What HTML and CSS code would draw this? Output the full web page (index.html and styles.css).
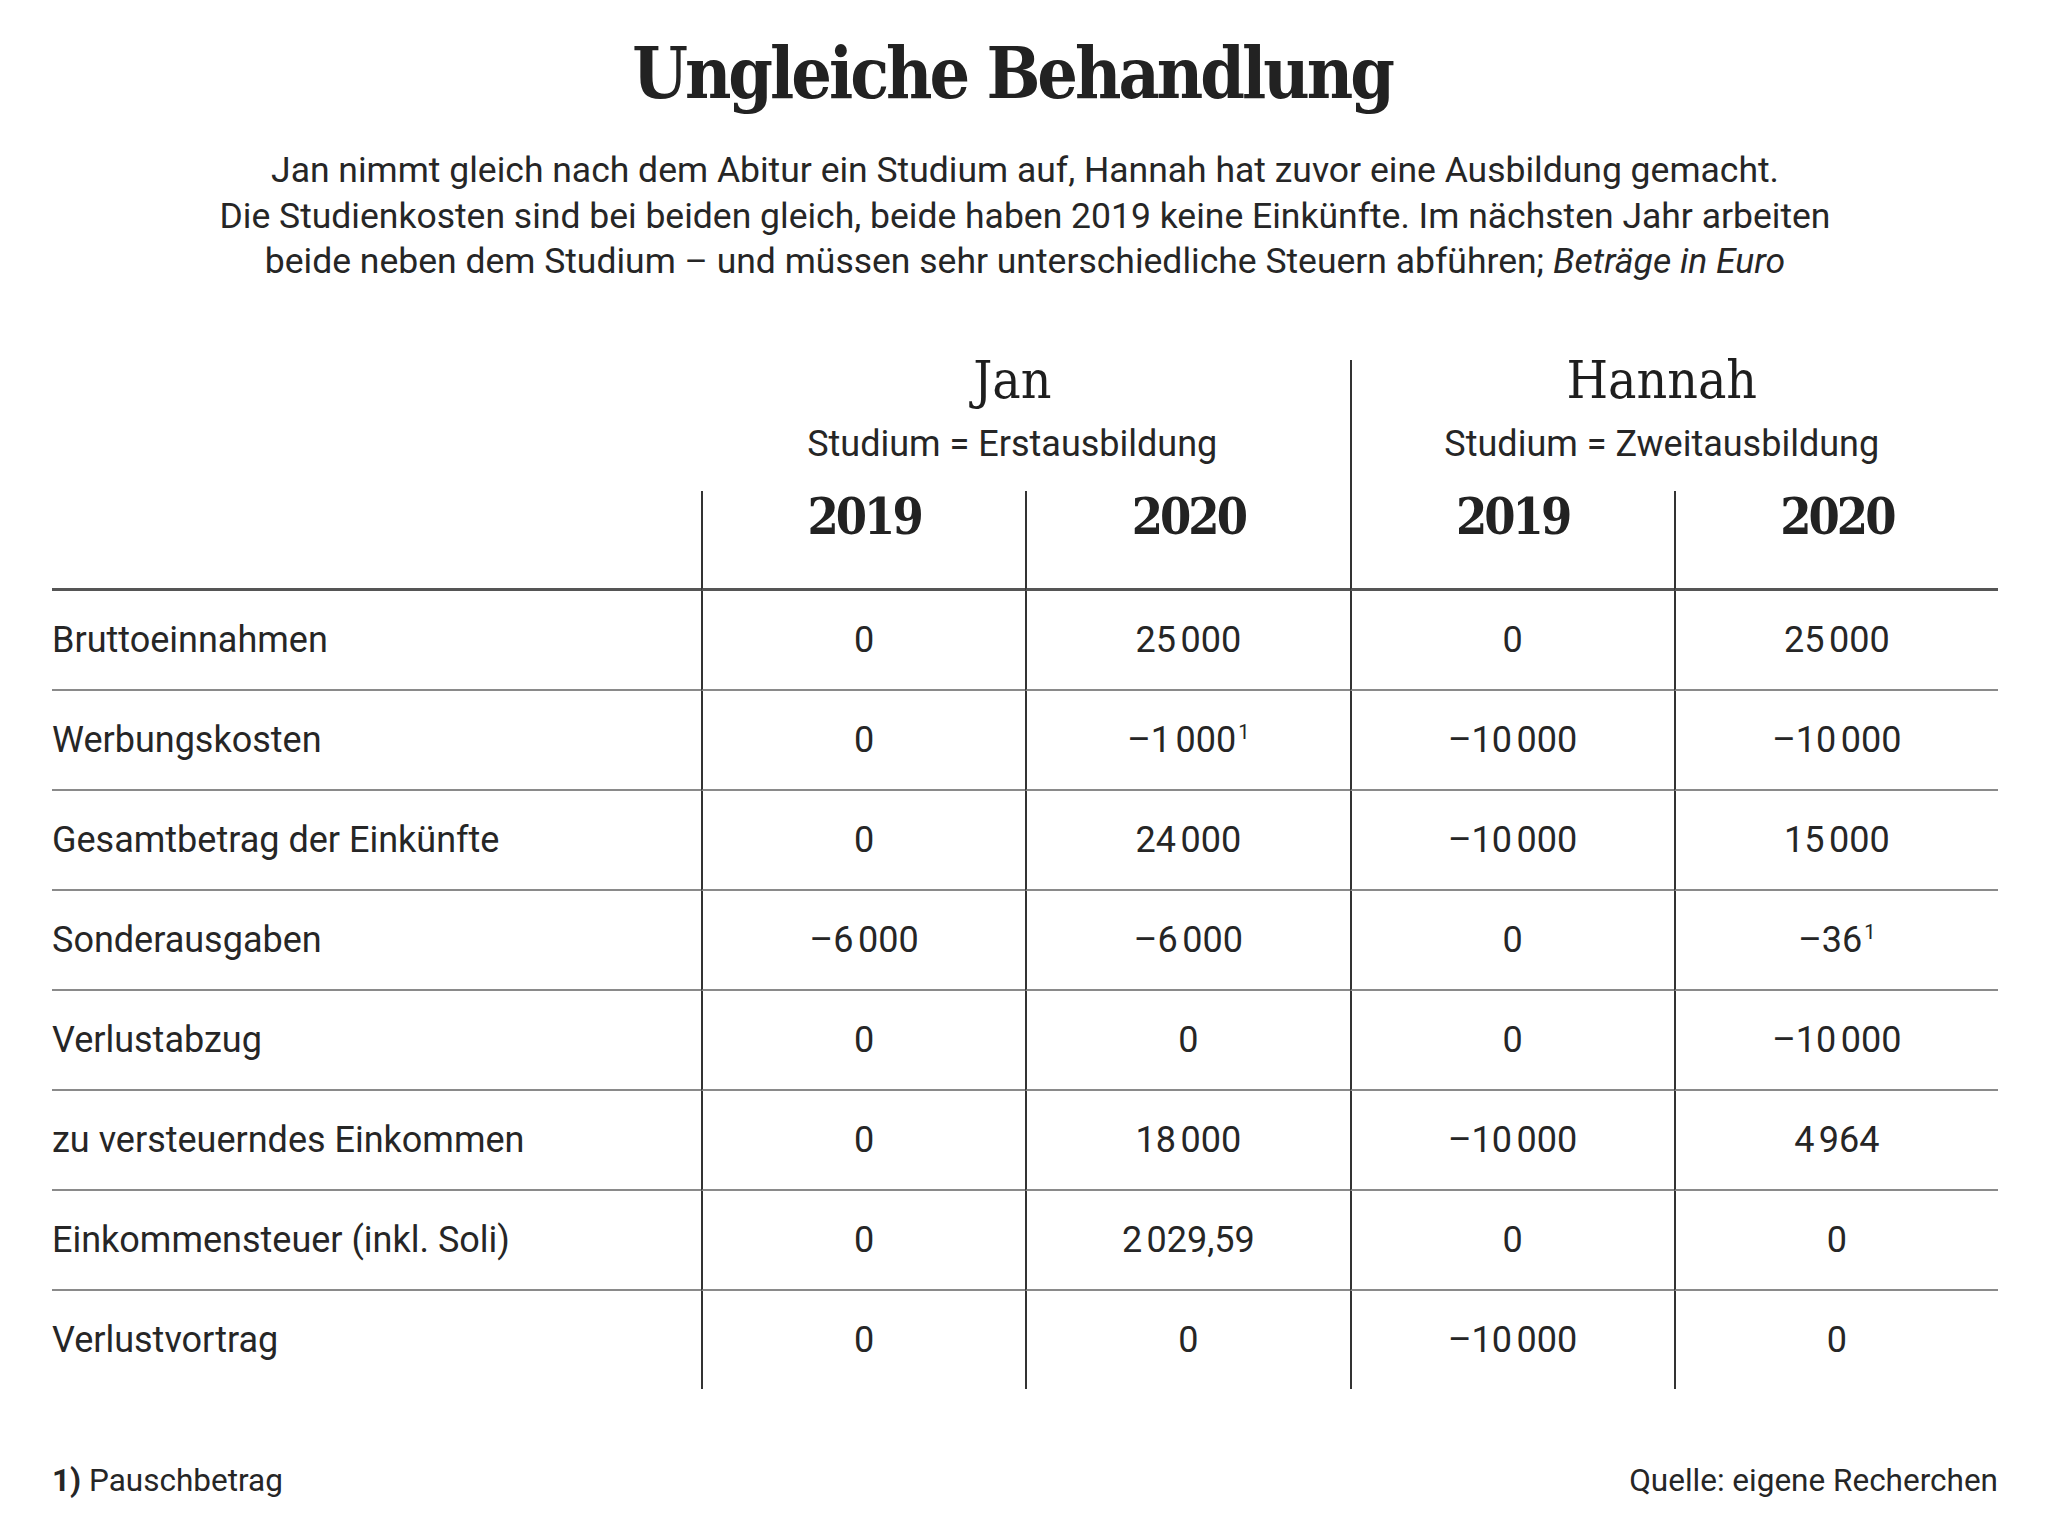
FILE: index.html
```html
<!DOCTYPE html>
<html lang="de">
<head>
<meta charset="utf-8">
<title>Ungleiche Behandlung</title>
<link rel="stylesheet" href="styles.css">
</head>
<body>
<main class="page">
  <h1 class="title">Ungleiche Behandlung</h1>
  <p class="intro">Jan nimmt gleich nach dem Abitur ein Studium auf, Hannah hat zuvor eine Ausbildung gemacht.<br>Die Studienkosten sind bei beiden gleich, beide haben 2019 keine Einkünfte. Im nächsten Jahr arbeiten<br>beide neben dem Studium – und müssen sehr unterschiedliche Steuern abführen; <em>Beträge in Euro</em></p>

  <div class="table">
    <div class="corner"></div>
    <div class="group">
      <div class="name">Jan</div>
      <div class="sub">Studium = Erstausbildung</div>
    </div>
    <div class="group group-b">
      <div class="name">Hannah</div>
      <div class="sub">Studium = Zweitausbildung</div>
    </div>
    <div class="year">2019</div>
    <div class="year">2020</div>
    <div class="year">2019</div>
    <div class="year">2020</div>

    <div class="row">
      <div class="label">Bruttoeinnahmen</div>
      <div class="num">0</div>
      <div class="num">25&#8239;000</div>
      <div class="num">0</div>
      <div class="num">25&#8239;000</div>
    </div>
    <div class="row">
      <div class="label">Werbungskosten</div>
      <div class="num">0</div>
      <div class="num">–1&#8239;000<sup class="fn">1</sup></div>
      <div class="num">–10&#8239;000</div>
      <div class="num">–10&#8239;000</div>
    </div>
    <div class="row">
      <div class="label">Gesamtbetrag der Einkünfte</div>
      <div class="num">0</div>
      <div class="num">24&#8239;000</div>
      <div class="num">–10&#8239;000</div>
      <div class="num">15&#8239;000</div>
    </div>
    <div class="row">
      <div class="label">Sonderausgaben</div>
      <div class="num">–6&#8239;000</div>
      <div class="num">–6&#8239;000</div>
      <div class="num">0</div>
      <div class="num">–36<sup class="fn">1</sup></div>
    </div>
    <div class="row">
      <div class="label">Verlustabzug</div>
      <div class="num">0</div>
      <div class="num">0</div>
      <div class="num">0</div>
      <div class="num">–10&#8239;000</div>
    </div>
    <div class="row">
      <div class="label">zu versteuerndes Einkommen</div>
      <div class="num">0</div>
      <div class="num">18&#8239;000</div>
      <div class="num">–10&#8239;000</div>
      <div class="num">4&#8239;964</div>
    </div>
    <div class="row">
      <div class="label">Einkommensteuer (inkl. Soli)</div>
      <div class="num">0</div>
      <div class="num">2&#8239;029,59</div>
      <div class="num">0</div>
      <div class="num">0</div>
    </div>
    <div class="row row-last">
      <div class="label">Verlustvortrag</div>
      <div class="num">0</div>
      <div class="num">0</div>
      <div class="num">–10&#8239;000</div>
      <div class="num">0</div>
    </div>
  </div>

  <footer class="foot">
    <span><b>1)</b> Pauschbetrag</span>
    <span>Quelle: eigene Recherchen</span>
  </footer>
</main>
</body>
</html>
```

FILE: styles.css
```css
* { box-sizing: border-box; }

html, body {
  margin: 0;
  padding: 0;
  background: #ffffff;
}

body {
  width: 2048px;
  color: #222222;
  font-family: Roboto, "Liberation Sans", sans-serif;
}

.page {
  padding: 38px 50px 0 52px;
}

.title {
  margin: 0;
  padding-right: 26px;
  text-align: center;
  font-family: "DejaVu Serif", serif;
  font-stretch: condensed;
  font-weight: 700;
  font-size: 71px;
  line-height: 71px;
  letter-spacing: -3px;
  color: #222222;
}

.intro {
  margin: 39px 0 0;
  text-align: center;
  font-size: 35.5px;
  line-height: 45.7px;
  color: #262626;
}

.intro em { font-style: italic; }

.table {
  margin-top: 75px;
  display: grid;
  grid-template-columns: 649px repeat(4, 1fr);
  grid-template-rows: 131px 100px repeat(7, 100px) 98px;
}

.row { display: contents; }

.corner {
  grid-row: 1 / 3;
  grid-column: 1;
  border-bottom: 3px solid #555555;
}

.group {
  grid-column: span 2;
  text-align: center;
  padding-right: 26px;
}

.group-b {
  border-left: 2px solid #333333;
}

.name {
  font-family: "DejaVu Serif", serif;
  font-stretch: condensed;
  font-weight: 400;
  font-size: 53px;
  line-height: 40px;
  color: #1e1e1e;
}

.sub {
  margin-top: 21px;
  font-size: 36px;
  line-height: 46px;
  color: #262626;
}

.year {
  border-left: 2px solid #333333;
  border-bottom: 3px solid #555555;
  text-align: center;
  padding-top: 1px;
  font-family: "DejaVu Serif", serif;
  font-stretch: condensed;
  font-weight: 700;
  font-size: 50px;
  line-height: 50px;
  letter-spacing: -3px;
  color: #222222;
}

.label,
.num {
  display: flex;
  align-items: center;
  border-bottom: 2px solid #8a8a8a;
  font-size: 36px;
  color: #262626;
}

.num {
  justify-content: center;
  border-left: 2px solid #333333;
}

.row-last .label,
.row-last .num {
  border-bottom: 0;
}

.fn {
  font-size: 20px;
  line-height: 0;
  align-self: flex-start;
  margin-top: 41px;
  margin-left: 2px;
}

.foot {
  margin-top: 75px;
  display: flex;
  justify-content: space-between;
  font-size: 31.5px;
  line-height: 34px;
  color: #262626;
}

.foot b { font-weight: 700; }
```
